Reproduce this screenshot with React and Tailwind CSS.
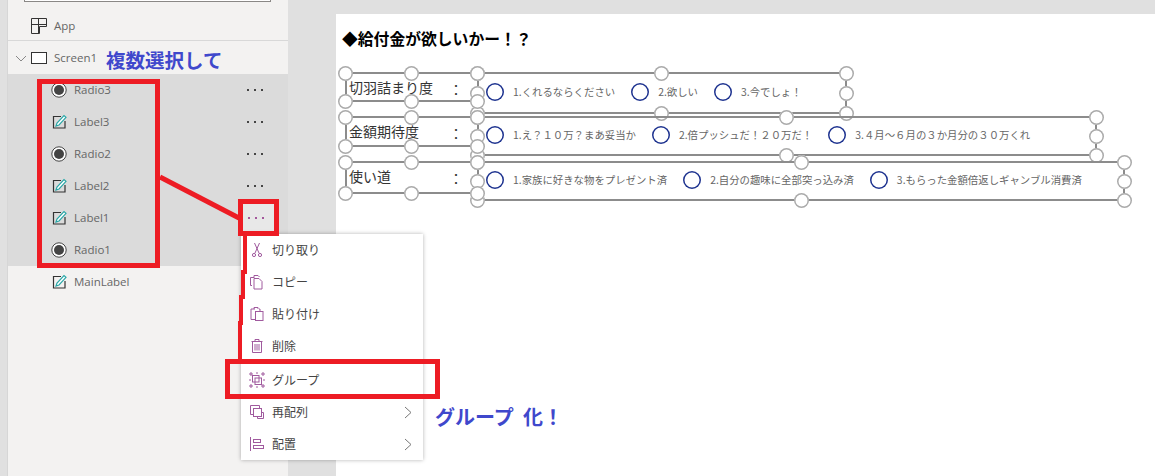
const cjk = "font-['Noto_Sans_CJK_JP','Noto_Sans',sans-serif]";

function RadioIcon() {
  return (
    <svg width="16" height="16" viewBox="0 0 16 16" className="shrink-0">
      <circle cx="8" cy="8" r="7.2" fill="#fff" stroke="#444" strokeWidth="1" />
      <circle cx="8" cy="8" r="5" fill="#444" />
    </svg>
  );
}

function LabelIcon() {
  return (
    <svg width="16" height="16" viewBox="0 0 16 16" className="shrink-0">
      <path d="M10 2.5H2.5v11.5H14V7" fill="none" stroke="#333" strokeWidth="1.2" />
      <path d="M5 12l1-3 7-7.5 2 1.8L8 11z" fill="#fff" stroke="#2aa7a7" strokeWidth="1.2" />
    </svg>
  );
}

function Dots({ color = '#444' }) {
  return (
    <svg width="16" height="4" viewBox="0 0 16 4">
      <rect x="0" y="1" width="2" height="2" fill={color} />
      <rect x="7" y="1" width="2" height="2" fill={color} />
      <rect x="14" y="1" width="2" height="2" fill={color} />
    </svg>
  );
}

const rows = [
  { name: 'Radio3', type: 'radio' },
  { name: 'Label3', type: 'label' },
  { name: 'Radio2', type: 'radio' },
  { name: 'Label2', type: 'label' },
  { name: 'Label1', type: 'label', active: true },
  { name: 'Radio1', type: 'radio', noDots: true },
];

function TreeRow({ row }) {
  return (
    <div className="flex h-8 items-center pl-[43px] pr-[25px]">
      <div className="flex w-4 justify-center">
        {row.type === 'radio' ? <RadioIcon /> : <LabelIcon />}
      </div>
      <span className="ml-[7px] flex-1 text-[11.5px] text-[#666]">{row.name}</span>
      {!row.noDots && <Dots color={row.active ? '#a4589c' : '#444'} />}
    </div>
  );
}

const iconProps = { width: 16, height: 16, viewBox: '0 0 16 16', fill: 'none', stroke: '#a05a9e', strokeWidth: 1 };

const menuIcons = {
  cut: (
    <svg {...iconProps}>
      <path d="M5.5 1l4.5 10M10.5 1L6 11" />
      <circle cx="5" cy="13" r="1.6" />
      <circle cx="11" cy="13" r="1.6" />
    </svg>
  ),
  copy: (
    <svg {...iconProps}>
      <path d="M5 4V1.5h4l1.5 1.5" />
      <path d="M3 11.5H1.5v-8H5" />
      <path d="M5 4.5h5l3 3v7.5H5z" />
    </svg>
  ),
  paste: (
    <svg {...iconProps}>
      <path d="M6 3H2v10.5h4" />
      <path d="M5 3V1.5h4V3M10 3h1v2.5" />
      <rect x="6.5" y="5.5" width="7.5" height="9" />
    </svg>
  ),
  trash: (
    <svg {...iconProps}>
      <path d="M2.5 3.5h11M6 3.5V1.5h4v2M3.5 3.5v11h9v-11" />
      <path d="M6 6v6.5M8 6v6.5M10 6v6.5" />
    </svg>
  ),
  group: (
    <svg {...iconProps}>
      <path d="M1 1h2v2H1zM13 1h2v2h-2zM1 13h2v2H1zM13 13h2v2h-2zM1 7v2M15 7v2M7 1h2M7 15h2" />
      <rect x="3.5" y="3.5" width="6.5" height="6.5" />
      <rect x="6" y="6" width="6.5" height="6.5" />
    </svg>
  ),
  order: (
    <svg {...iconProps}>
      <path d="M4 10.5H1.5v-9h9V4" />
      <rect x="4.5" y="4.5" width="8" height="8" />
      <path d="M13 8.5h1.5v6h-6V13" />
    </svg>
  ),
  align: (
    <svg {...iconProps}>
      <path d="M1.5 1v14" />
      <rect x="4.5" y="3.5" width="7" height="3" />
      <rect x="4.5" y="9.5" width="10" height="3" />
    </svg>
  ),
};

const menuItems = [
  { icon: 'cut', label: '切り取り' },
  { icon: 'copy', label: 'コピー' },
  { icon: 'paste', label: '貼り付け' },
  { icon: 'trash', label: '削除' },
  { icon: 'group', label: 'グループ', gap: true },
  { icon: 'order', label: '再配列', more: true },
  { icon: 'align', label: '配置', more: true },
];

function ContextMenu() {
  return (
    <div className={`absolute left-[241px] top-[234px] w-[182px] bg-white shadow-[0_0_4px_rgba(0,0,0,0.3)] ${cjk}`}>
      {menuItems.map((item) => (
        <div key={item.label} className={`flex h-8 items-center pl-[8px] pr-[11px] ${item.gap ? 'mt-0.5' : ''}`}>
          {menuIcons[item.icon]}
          <span className="ml-[7px] flex-1 text-xs text-[#444]">{item.label}</span>
          {item.more && (
            <svg width="8" height="13" viewBox="0 0 8 13" fill="none" stroke="#777" strokeWidth="1">
              <path d="M1 1l6 5.5L1 12" />
            </svg>
          )}
        </div>
      ))}
    </div>
  );
}

function Handle({ x, y }) {
  return (
    <div
      className="absolute h-[15px] w-[15px] rounded-full bg-white shadow-[inset_0_0_0_1.5px_#aaaaaa]"
      style={{ left: x - 7, top: y - 7 }}
    />
  );
}

function LabelBox({ y, h, text, textY }) {
  return (
    <>
      <div
        className="absolute left-[345px] w-[132px] border-y-2 border-l-2 border-[#8c8c8c]"
        style={{ top: y - 1, height: h + 2 }}
      />
      <div
        className={`absolute left-[349px] w-[114px] flex justify-between text-sm leading-5 text-[#333] ${cjk}`}
        style={{ top: textY }}
      >
        <span>{text}</span>
        <span className="pt-0.5">：</span>
      </div>
      {[345, 411, 477].map((x) => (
        <div key={x}>
          <Handle x={x} y={y} />
          <Handle x={x} y={y + h} />
        </div>
      ))}
    </>
  );
}

function RadioBox({ y, h, right, mid, options }) {
  return (
    <>
      <div
        className={`absolute left-[477px] flex items-center gap-4 border-2 border-[#8c8c8c] pl-[7px] text-[10.4px] text-[#666] ${cjk}`}
        style={{ top: y - 1, height: h + 2, width: right - 477 + 1 }}
      >
        {options.map((o) => (
          <div key={o} className="flex items-center gap-[9px] pb-[3px]">
            <span className="h-[18px] w-[18px] rounded-full bg-white shadow-[inset_0_0_0_1.5px_#1f3490]" />
            <span>{o}</span>
          </div>
        ))}
      </div>
      {[477, mid, right].map((x) => (
        <div key={x}>
          <Handle x={x} y={y} />
          <Handle x={x} y={y + h} />
        </div>
      ))}
      <Handle x={477} y={y + h / 2} />
      <Handle x={right} y={y + h / 2} />
    </>
  );
}

const formRows = [
  {
    label: { y: 73, h: 28, text: '切羽詰まり度', textY: 77 },
    radio: { y: 73, h: 40, right: 846, mid: 661, options: ['1.くれるならください', '2.欲しい', '3.今でしょ！'] },
  },
  {
    label: { y: 117, h: 29, text: '金額期待度', textY: 121 },
    radio: { y: 117, h: 38, right: 1096, mid: 786, options: ['1.え？１０万？まあ妥当か', '2.倍プッシュだ！２０万だ！', '3.４月～６月の３か月分の３０万くれ'] },
  },
  {
    label: { y: 162, h: 31, text: '使い道', textY: 166 },
    radio: { y: 162, h: 38, right: 1124, mid: 801, options: ['1.家族に好きな物をプレゼント済', '2.自分の趣味に全部突っ込み済', '3.もらった金額倍返しギャンブル消費済'] },
  },
];

export default function App() {
  return (
    <div className="relative flex h-[476px] w-[1155px] overflow-hidden bg-[#e0e0e0] font-['Open_Sans','Noto_Sans_CJK_JP',sans-serif]">
      {/* tree view */}
      <aside className="ml-[7px] flex w-[281px] flex-col border-l border-[#d6d6d6] bg-[#f3f2f1]">
        <div className="ml-4 h-0.5 w-[247px] border-x border-b border-[#8a8886] bg-white" />
        <div className="flex h-[39px] items-center border-b border-[#d8d8d8] pl-[23px] pt-2.5">
          <svg width="16" height="16" viewBox="0 0 16 16" fill="none" stroke="#333" strokeWidth="1">
            <path d="M.5 6.5h15M7.5.5v15M.5.5h15v8h-7v7h-8z" />
          </svg>
          <span className="ml-[7px] text-[11.5px] text-[#666]">App</span>
        </div>
        <div className="flex h-[33px] items-center pl-[6px] pt-px">
          <svg width="14" height="14" viewBox="0 0 14 14" fill="none" stroke="#888" strokeWidth="1">
            <path d="M2 5l5 5 5-5" />
          </svg>
          <svg className="ml-[3px]" width="16" height="12" viewBox="0 0 16 12" fill="#fff" stroke="#333" strokeWidth="1">
            <rect x=".5" y=".5" width="15" height="11" />
          </svg>
          <span className="ml-[7px] text-[11.5px] text-[#666]">Screen1</span>
        </div>
        <div className="bg-[#dbdbdb]">
          {rows.map((row) => (
            <TreeRow key={row.name} row={row} />
          ))}
        </div>
        <TreeRow row={{ name: 'MainLabel', type: 'label', noDots: true }} />
      </aside>

      {/* canvas */}
      <main className="ml-12 mt-3.5 flex-1 bg-white pl-1.5 pt-[13px]">
        <h1 className={`text-[15.8px] font-bold leading-6 text-black ${cjk}`}>◆給付金が欲しいかー！？</h1>
      </main>

      {formRows.map((row) => (
        <div key={row.label.text}>
          <RadioBox {...row.radio} />
          <LabelBox {...row.label} />
        </div>
      ))}

      <div className="absolute left-[243px] top-[204px] h-[28px] w-[31px] bg-[#e8e8e8]" />
      <div className="absolute left-[248px] top-[216px]"><Dots color="#a4589c" /></div>

      <ContextMenu />

      {/* hand drawn annotations */}
      <div className="absolute left-[37px] top-[79px] h-[189px] w-[123px] border-[5px] border-[#ed1c24]" />
      <div className="absolute left-[238px] top-[199px] h-[37px] w-[41px] border-[5px] border-[#ed1c24]" />
      <div className="absolute left-[225px] top-[359px] h-[40px] w-[215px] border-[5px] border-[#ed1c24]" />
      <svg className="absolute left-0 top-0" width="1155" height="476" fill="none" stroke="#ed1c24">
        <path d="M160 177L239 218" strokeWidth="5" />
        <path d="M245 236V272H243V297H241V323H240V360" strokeWidth="4" />
      </svg>
      <div className={`absolute left-[106px] top-[46px] text-[19.5px] font-bold leading-7 text-[#3f48cc] ${cjk}`}>複数選択して</div>
      <div className={`absolute left-[435px] top-[403px] text-[20px] font-bold leading-7 text-[#3f48cc] ${cjk}`}>グループ&nbsp;&nbsp;化！</div>
    </div>
  );
}
